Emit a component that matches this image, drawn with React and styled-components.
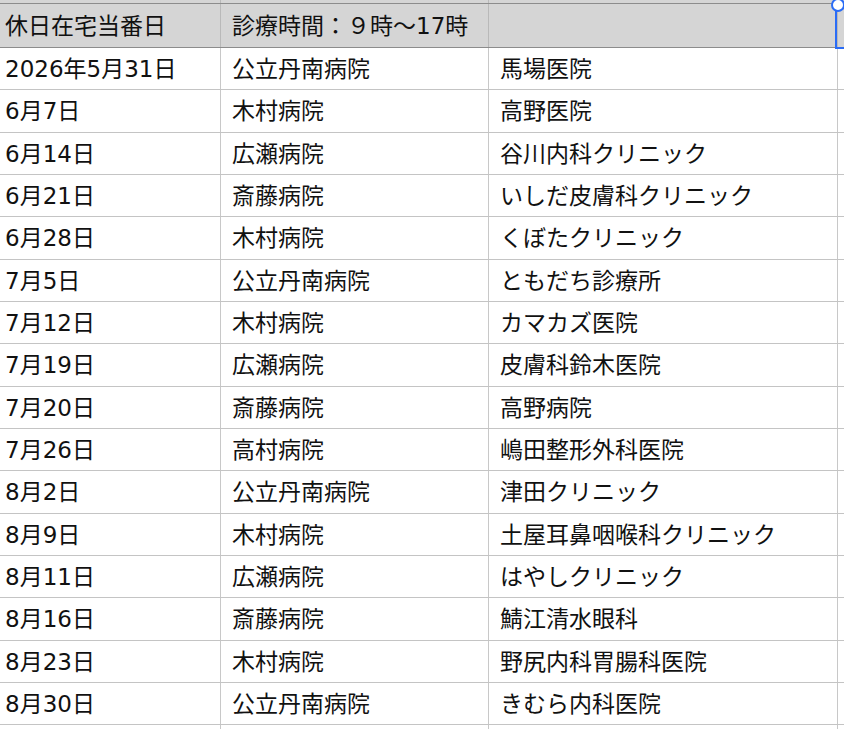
import React from "react";
import styled, { createGlobalStyle } from "styled-components";

const GlobalStyle = createGlobalStyle`
  html, body {
    margin: 0;
    padding: 0;
    background: #ffffff;
  }
  body {
    font-family: "DejaVu Sans", "Noto Sans CJK JP", sans-serif;
    color: #111111;
    overflow: hidden;
  }
`;

const rows = [
  ["2026年5月31日", "公立丹南病院", "馬場医院"],
  ["6月7日", "木村病院", "高野医院"],
  ["6月14日", "広瀬病院", "谷川内科クリニック"],
  ["6月21日", "斎藤病院", "いしだ皮膚科クリニック"],
  ["6月28日", "木村病院", "くぼたクリニック"],
  ["7月5日", "公立丹南病院", "ともだち診療所"],
  ["7月12日", "木村病院", "カマカズ医院"],
  ["7月19日", "広瀬病院", "皮膚科鈴木医院"],
  ["7月20日", "斎藤病院", "高野病院"],
  ["7月26日", "高村病院", "嶋田整形外科医院"],
  ["8月2日", "公立丹南病院", "津田クリニック"],
  ["8月9日", "木村病院", "土屋耳鼻咽喉科クリニック"],
  ["8月11日", "広瀬病院", "はやしクリニック"],
  ["8月16日", "斎藤病院", "鯖江清水眼科"],
  ["8月23日", "木村病院", "野尻内科胃腸科医院"],
  ["8月30日", "公立丹南病院", "きむら内科医院"],
];

const Sheet = styled.div`
  position: relative;
  width: 844px;
  height: 729px;
  overflow: hidden;
`;

const Row = styled.div`
  display: grid;
  grid-template-columns: 221px 268px 349px 1fr;
  box-sizing: border-box;
  height: ${(p) => p.height || "42.33px"};
  background: ${(p) => (p.head ? "#d5d5d5" : "#ffffff")};
  border-bottom: 1px solid ${(p) => (p.head ? "#8c8c8c" : "#c4c4c4")};
`;

const Cell = styled.div`
  display: flex;
  align-items: center;
  padding-left: ${(p) => (p.first ? "5px" : "11px")};
  padding-top: 2px;
  border-right: 1px solid ${(p) => (p.head ? "#b9b9b9" : "#c8c8c8")};
  font-size: 23px;
  line-height: 1;
  white-space: nowrap;
  overflow: hidden;
  &:last-child {
    border-right: 0;
  }
`;

const Selection = styled.div`
  position: absolute;
  left: 835px;
  top: 3px;
  width: 30px;
  height: 46px;
  box-sizing: border-box;
  border: 2px solid #2a6cf6;
`;

const Handle = styled.div`
  position: absolute;
  left: -6px;
  top: -7px;
  width: 10px;
  height: 10px;
  border-radius: 50%;
  background: #ffffff;
  border: 2px solid #2a6cf6;
`;

const App = () => {
  return (
    <>
      <GlobalStyle />
      <Sheet>
        <Row head height="4px">
          <Cell head first />
          <Cell head />
          <Cell head />
          <Cell head />
        </Row>
        <Row head height="44px">
          <Cell head first>
            休日在宅当番日
          </Cell>
          <Cell head>診療時間：９時〜17時</Cell>
          <Cell head />
          <Cell head />
        </Row>
        {rows.map((r, i) => (
          <Row key={i}>
            <Cell first>{r[0]}</Cell>
            <Cell>{r[1]}</Cell>
            <Cell>{r[2]}</Cell>
            <Cell />
          </Row>
        ))}
        <Row>
          <Cell first />
          <Cell />
          <Cell />
          <Cell />
        </Row>
        <Selection>
          <Handle />
        </Selection>
      </Sheet>
    </>
  );
};

export default App;
